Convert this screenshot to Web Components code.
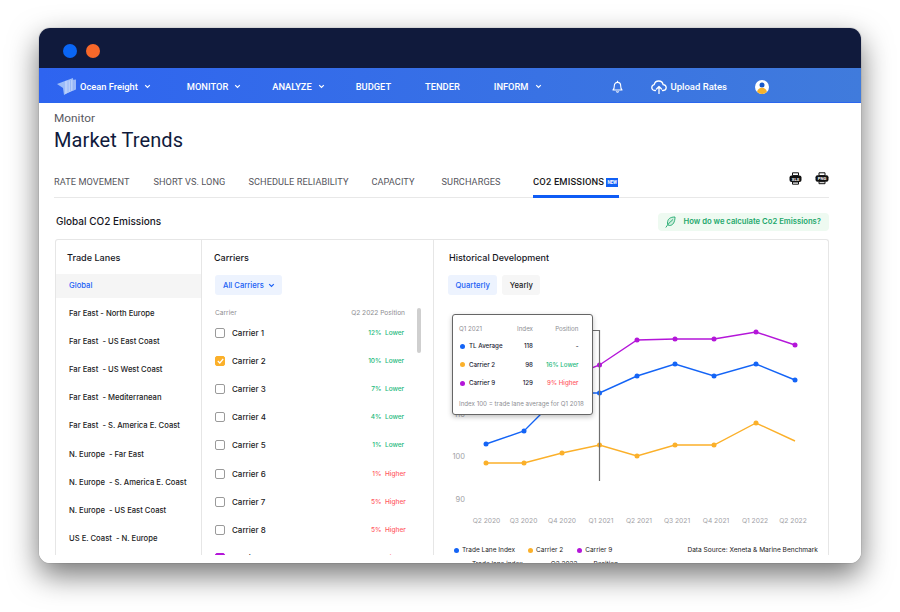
<!DOCTYPE html>
<html lang="en">
<head>
<meta charset="utf-8">
<title>Market Trends</title>
<style>
html,body{margin:0;padding:0;background:#fff;font-family:Inter,"Liberation Sans",sans-serif;}
</style>
</head>
<body>
<app-window>
  <title-bar></title-bar>
  <main-nav></main-nav>
  <page-body>
    <page-head></page-head>
    <tab-bar></tab-bar>
    <section-head></section-head>
    <data-panel>
      <lane-list></lane-list>
      <carrier-list></carrier-list>
      <history-chart></history-chart>
    </data-panel>
  </page-body>
</app-window>
<script>
function comp(name, css, html, init){
  customElements.define(name, class extends HTMLElement{
    constructor(){
      super();
      const r=this.attachShadow({mode:'open'});
      const h=typeof html==='function'?html(this):html;
      r.innerHTML='<style>'+css+'</style>'+h;
    }
  });
}
const chev='<svg width="7" height="5" viewBox="0 0 7 5" fill="none" stroke="currentColor" stroke-width="1.2"><path d="M1.200 1.200l2.300 2.300 2.300-2.300"/></svg>';

comp('app-window',`:host{display:flex;flex-direction:column;width:822px;height:535px;margin:28px 39px 49px;background:#fff;border-radius:11px;overflow:hidden;box-shadow:0 12px 30px rgba(0,0,0,.55),0 0 0 1px rgba(0,0,0,.06);}`,'<slot></slot>');

comp('title-bar',`:host{display:flex;flex:none;align-items:center;gap:9px;height:40px;padding:6px 0 0 24px;box-sizing:border-box;background:#101a3c;}
i{width:14px;height:14px;border-radius:50%;display:block}`,'<i style="background:#0a66f5"></i><i style="background:#f7682a"></i>');

comp('nav-item',`:host{display:inline-flex;align-items:center;gap:5px;font:500 9.300px/14px Roboto,sans-serif;color:#fff;white-space:nowrap}
svg{display:block;margin-left:1px}`,h=>'<slot></slot>'+(h.hasAttribute('menu')?chev:''));

comp('main-nav',`:host{display:flex;flex:none;align-items:center;height:35px;padding:3px 0 0 18px;box-sizing:border-box;background:linear-gradient(90deg,#2e64f0,#407bdc);border-bottom:1px solid #2a66ee;color:#fff}
nav-item{flex:none}
.logo{margin-right:4px;display:block}
.bell{margin-left:70px;display:block}
.up{margin-left:28px;margin-right:4px;display:block}
.av{margin-left:28px;display:block}`,
`<svg class="logo" width="19" height="17" viewBox="0 0 19 17"><path d="M0 6L16 0v12L7 17l-1-7z" fill="#9dbdf8"/><path d="M8 3l11-1.500V11.500L8 16z" fill="#c3d6fb" opacity=".75"/><path d="M11 2.500v12M13.500 2v11.500M16 1.500v11" stroke="#8fb2f6" stroke-width=".8"/></svg>
<nav-item menu>Ocean Freight</nav-item>
<nav-item menu style="margin-left:36px">MONITOR</nav-item>
<nav-item menu style="margin-left:31px">ANALYZE</nav-item>
<nav-item style="margin-left:31px">BUDGET</nav-item>
<nav-item style="margin-left:34px">TENDER</nav-item>
<nav-item menu style="margin-left:34px">INFORM</nav-item>
<svg class="bell" width="11" height="13" viewBox="0 0 11 13" fill="none" stroke="#fff" stroke-width="1.100" stroke-linejoin="round"><path d="M1 10h9c-1-1-1.300-2-1.300-4 0-2-1.300-3.600-3.200-3.600S2.300 4 2.300 6c0 2-.3 3-1.300 4z"/><path d="M5.500 .8v1.400M4.200 11.400c.3 1 2.300 1 2.600 0"/></svg>
<svg class="up" width="16" height="14" viewBox="0 0 16 14" fill="none" stroke="#fff" stroke-width="1.300" stroke-linecap="round" stroke-linejoin="round"><path d="M4.500 10.500H3.800C2 10.500 .8 9.200 .8 7.600c0-1.500 1-2.600 2.400-2.900C3.600 2.500 5.500 1 7.700 1c2.300 0 4 1.500 4.400 3.600 1.900.1 3.100 1.400 3.100 3 0 1.600-1.200 2.900-3 2.900h-.7"/><path d="M8 13.500V6.500M5.500 9L8 6.500 10.500 9"/></svg>
<nav-item style="font-size:9.500px">Upload Rates</nav-item>
<svg class="av" width="14" height="14" viewBox="0 0 14 14"><defs><clipPath id="c"><circle cx="7" cy="7" r="7"/></clipPath></defs><circle cx="7" cy="7" r="7" fill="#fff"/><g clip-path="url(#c)"><circle cx="7" cy="5" r="2.500" fill="#1757c9"/><ellipse cx="7" cy="11.500" rx="4.800" ry="3.700" fill="#f6b22c"/></g></svg>`);

comp('page-body',`:host{display:flex;flex-direction:column;flex:1;min-height:0;padding:8px 32px 0 15px;background:#fff}`,'<slot></slot>');

comp('page-head',`:host{display:block;flex:none}
.a{font:400 11.800px/14px Roboto,sans-serif;color:#5a5a5f}
.b{font:400 20px/26px Roboto,sans-serif;color:#101a3c;margin-top:2px;letter-spacing:.1px}`,
'<div class="a">Monitor</div><div class="b">Market Trends</div>');

comp('tab-item',`:host{display:flex;align-items:center;height:28px;box-sizing:border-box;margin-bottom:-1px;padding-bottom:4px;font:400 9.200px/14px Roboto,sans-serif;letter-spacing:.07px;color:#55555c;white-space:nowrap}
:host([active]){color:#1a1a22;font-weight:500;font-size:9.400px;letter-spacing:.15px;border-bottom:3px solid #0f5cf5;padding-bottom:1px;padding-right:1px}
b{display:inline-block;margin-left:2px;width:12px;height:9px;background:#1160f5;color:#fff;font:700 4.500px/9px Roboto,sans-serif;letter-spacing:0;text-align:center}`,
h=>'<slot></slot>'+(h.hasAttribute('active')?'<b>NEW</b>':''));

comp('tab-bar',`:host{display:flex;flex:none;align-items:flex-end;margin-top:17px;border-bottom:1px solid #e8e8e8;position:relative}
.tools{margin-left:auto;display:flex;gap:13px;align-self:flex-start;margin-top:2px}
svg{display:block}`,
`<tab-item>RATE MOVEMENT</tab-item>
<tab-item style="margin-left:24px">SHORT VS. LONG</tab-item>
<tab-item style="margin-left:23px">SCHEDULE RELIABILITY</tab-item>
<tab-item style="margin-left:23px">CAPACITY</tab-item>
<tab-item style="margin-left:27px">SURCHARGES</tab-item>
<tab-item active style="margin-left:32.500px">CO2 EMISSIONS</tab-item>
<div class="tools">
<svg width="13" height="13" viewBox="0 0 13 13"><path d="M3.500 .8h6v2.800h-6z" fill="none" stroke="#111" stroke-width="1"/><rect x=".5" y="3.500" width="12" height="6.500" rx="2" fill="#111"/><path d="M3.500 10h6v2.200h-6z" fill="#fff" stroke="#111"/><text x="6.500" y="8.500" font-family="Roboto" font-size="4.200" font-weight="700" text-anchor="middle" fill="#fff">XLS</text></svg>
<svg width="14" height="13" viewBox="0 0 14 13"><path d="M4 .8h6v2.800H4z" fill="none" stroke="#111" stroke-width="1"/><rect x=".5" y="3.200" width="13" height="6.500" rx="2" fill="#111"/><path d="M4 9.700h6v2H4z" fill="#fff" stroke="#111"/><text x="7" y="8.200" font-family="Roboto" font-size="4.200" font-weight="700" text-anchor="middle" fill="#fff">PNG</text></svg>
</div>`);

comp('section-head',`:host{display:flex;flex:none;align-items:center;justify-content:space-between;margin:15px 0 8px 2px;height:18px}
.t{font:500 10px/14px Inter,sans-serif;color:#16161e;margin-top:-2px}
.p{display:flex;align-items:center;gap:7px;height:18px;box-sizing:border-box;padding:0 8px 0 7px;background:#eefaf1;border-radius:4px;font:600 7.700px/12px Inter,sans-serif;color:#1da86c;white-space:nowrap}
svg{display:block}`,
`<div class="t">Global CO2 Emissions</div>
<div class="p"><svg width="11" height="12" viewBox="0 0 11 12" fill="none" stroke="#1da86c" stroke-width=".9"><path d="M10 1C5 1 2.500 3 2.500 7c0 1.500.7 2.500 2 2.500C8 9.500 10 6 10 1z" fill="#cfeedd"/><path d="M.8 11.500C3 8 5.500 5.500 8 3.500"/></svg><span>How do we calculate Co2 Emissions?</span></div>`);

comp('data-panel',`:host{display:flex;flex:none;height:316px;box-sizing:border-box;border:1px solid #e6e6e6;border-bottom:0;border-radius:3px 3px 0 0;margin-left:1px}`,'<slot></slot>');

comp('lane-row',`:host{display:flex;align-items:center;height:24px;padding-left:13px;margin-bottom:4.100px;font:500 7.650px/12px Inter,sans-serif;color:#1c1c24;white-space:pre}
:host([active]){background:#f5f5f5;color:#1a60f5}`,'<slot></slot>');

comp('lane-list',`:host{display:block;flex:none;width:145px;height:315px;overflow:hidden;border-right:1px solid #e6e6e6}
.t{font:500 9.100px/16px Inter,sans-serif;color:#16161e;padding:10px 0 8px 11px;height:16px}`,
`<div class="t">Trade Lanes</div>
<lane-row active>Global</lane-row>
<lane-row>Far East - North Europe</lane-row>
<lane-row>Far East  - US East Coast</lane-row>
<lane-row>Far East  - US West Coast</lane-row>
<lane-row>Far East  - Mediterranean</lane-row>
<lane-row>Far East  - S. America E. Coast</lane-row>
<lane-row>N. Europe  - Far East</lane-row>
<lane-row>N. Europe  - S. America E. Coast</lane-row>
<lane-row>N. Europe  - US East Coast</lane-row>
<lane-row>US E. Coast  - N. Europe</lane-row>`);

comp('carrier-row',`:host{display:flex;align-items:center;height:28.100px;font:500 8px/12px Inter,sans-serif;color:#1c1c24}
.c{flex:none;width:10px;height:10px;box-sizing:border-box;border:1.300px solid #9a9a9a;border-radius:2px;margin-right:7px;display:flex;align-items:center;justify-content:center}
:host([state=orange]) .c{background:#fbb02a;border-color:#fbb02a}
:host([state=purple]) .c{background:#b416d9;border-color:#b416d9}
.n{flex:1}
.v{display:grid;grid-template-columns:30px 21px;column-gap:3.500px;font:500 6.500px/12px Inter,sans-serif;text-align:right}
.v span:last-child{text-align:left;white-space:nowrap}
:host([dir=Lower]) .v{color:#1db97c}
:host([dir=Higher]) .v{color:#ff5a64}`,
h=>{const s=h.getAttribute('state');return `<div class="c">${s==='orange'?'<svg width="7" height="6" viewBox="0 0 7 6" fill="none" stroke="#fff" stroke-width="1.200"><path d="M.8 3l2 2L6.200 1"/></svg>':''}</div><div class="n"><slot></slot></div><div class="v"><span>${h.getAttribute('pct')}</span><span>${h.getAttribute('dir')}</span></div>`});

comp('carrier-list',`:host{display:block;flex:none;position:relative;width:232px;height:315px;overflow:hidden;border-right:1px solid #e6e6e6;box-sizing:border-box;padding:10px 27px 0 13px}
.t{font:500 9px/16px Inter,sans-serif;color:#16161e;margin-left:-1px}
.btn{display:inline-flex;align-items:center;gap:4px;height:20px;box-sizing:border-box;padding:1px 7px 0 8px;margin:9px 0 0 0;background:#edf3fe;border-radius:3px;font:500 7.650px/12px Inter,sans-serif;color:#1a60f5;vertical-align:top}
.btnw{height:29px}
.h{display:flex;justify-content:space-between;font:400 6.600px/14px Inter,sans-serif;color:#8d8d92;margin:11px 1px 0 0;height:13px}
.sb{position:absolute;left:215px;top:68px;width:4px;height:45px;background:#cfcfcf;border-radius:2px}`,
`<div class="t">Carriers</div>
<div class="btnw"><div class="btn">All Carriers ${chev}</div></div>
<div class="h"><span>Carrier</span><span>Q2 2022 Position</span></div>
<carrier-row pct="12%" dir="Lower">Carrier 1</carrier-row>
<carrier-row pct="10%" dir="Lower" state="orange">Carrier 2</carrier-row>
<carrier-row pct="7%" dir="Lower">Carrier 3</carrier-row>
<carrier-row pct="4%" dir="Lower">Carrier 4</carrier-row>
<carrier-row pct="1%" dir="Lower">Carrier 5</carrier-row>
<carrier-row pct="1%" dir="Higher">Carrier 6</carrier-row>
<carrier-row pct="5%" dir="Higher">Carrier 7</carrier-row>
<carrier-row pct="5%" dir="Higher">Carrier 8</carrier-row>
<carrier-row pct="9%" dir="Higher" state="purple">Carrier 9</carrier-row>
<div class="sb"></div>`);

comp('chart-tooltip',`:host{position:absolute;left:18px;top:14px;width:141px;height:101px;box-sizing:border-box;background:#fff;border:1px solid #666;border-radius:3px;box-shadow:0 2px 5px rgba(0,0,0,.25);padding:6.250px 13.500px 0 6px;font:500 6.200px/12px Inter,sans-serif;color:#1c1c34}
.g{display:grid;grid-template-columns:10px 48px 16px 1fr;grid-template-rows:15.500px 18.500px 18.500px 18.500px;align-items:center}
.h{color:#8d8d92;font-weight:400}
.r{text-align:right;white-space:nowrap}
.d{width:5px;height:5px;border-radius:50%;margin-left:1px}
.f{color:#8d8d92;font-weight:400;margin-top:5.750px;white-space:nowrap}
.hd{grid-column:1/3}`,
`<div class="g">
<span class="h hd">Q1 2021</span><span class="h r">Index</span><span class="h r">Position</span>
<i class="d" style="background:#1464f6"></i><span>TL Average</span><span class="r">118</span><span class="r">-</span>
<i class="d" style="background:#fbb02a"></i><span>Carrier 2</span><span class="r">98</span><span class="r" style="color:#1db97c">16% Lower</span>
<i class="d" style="background:#b416d9"></i><span>Carrier 9</span><span class="r">129</span><span class="r" style="color:#ff5a64">9% Higher</span>
</div><div class="f">Index 100 = trade lane average for Q1 2018</div>`);

comp('legend-item',`:host{display:inline-flex;align-items:center;gap:3.500px;font:400 6.500px/14px Inter,sans-serif;color:#1c1c24;white-space:nowrap}
i{width:5px;height:5px;border-radius:50%;background:var(--c)}`,'<i></i><slot></slot>');

const xs=[486,524,562,599.500,637,675,714,756,795];
const line=(ys,c,skip)=>{
  const pts=ys.map((y,i)=>xs[i]+','+y).join(' ');
  return `<polyline points="${pts}" fill="none" stroke="${c}" stroke-width="1.400"/>`+
  ys.map((y,i)=>skip===i?'':`<circle cx="${xs[i]}" cy="${y}" r="2.500" fill="${c}"/>`).join('');
};
const xl=['Q2 2020','Q3 2020','Q4 2020','Q1 2021','Q2 2021','Q3 2021','Q4 2021','Q1 2022','Q2 2022'];
const xlx=[486.500,523.500,562,601,639,677,716,755,793];

comp('history-chart',`:host{display:block;flex:1;min-width:0;position:relative}
.t{font:500 9px/16px Inter,sans-serif;color:#16161e;padding:10px 0 0 15px}
.bs{display:flex;gap:5px;margin:9px 0 0 14px}
.b{height:20px;display:flex;align-items:center;box-sizing:border-box;padding:1px 7.500px 0;border-radius:3px;font:500 7.650px/12px Inter,sans-serif;background:#f6f6f6;color:#1c1c24}
.b.on{background:#edf3fe;color:#1a60f5}
.plot{position:relative;height:230px;margin-top:5px}
svg{display:block;position:absolute;left:0;top:0}
text{font:400 6.700px Inter,sans-serif;fill:#a2a2a6}
.y{font-size:7.500px}
.lg{display:flex;align-items:center;height:14px;margin:13px 10px 0 19.500px}
.lg2{display:flex;height:14px;margin:0 0 0 38px;font:400 6.500px/14px Inter,sans-serif;color:#1c1c24}
.ds{margin-left:auto;font:400 6.600px/14px Inter,sans-serif;color:#1c1c24}`,
`<div class="t">Historical Development</div>
<div class="bs"><div class="b on">Quarterly</div><div class="b">Yearly</div></div>
<div class="plot">
<svg width="395" height="230" viewBox="434 300 395 230">
<text class="y" x="465" y="417" text-anchor="end">110</text>
<text class="y" x="465" y="459" text-anchor="end">100</text>
<text class="y" x="465" y="502" text-anchor="end">90</text>
${xl.map((t,i)=>`<text x="${xlx[i]}" y="523" text-anchor="middle">${t}</text>`).join('')}
${line([463,463,453,445,456,445,445,423,441],'#fbb02a',8)}
${line([444,431,393,393,376,364,376,364,380],'#1464f6')}
${line([400,395,380,365,340,339,339,332,345],'#b416d9')}
<path d="M590 330.500h9.500V481" fill="none" stroke="#6f6f6f" stroke-width="1.200"/>
</svg>
<chart-tooltip></chart-tooltip>
</div>
<div class="lg"><legend-item style="--c:#1464f6">Trade Lane Index</legend-item><legend-item style="--c:#fbb02a;margin-left:12.500px">Carrier 2</legend-item><legend-item style="--c:#b416d9;margin-left:13.500px">Carrier 9</legend-item><span class="ds">Data Source: Xeneta &amp; Marine Benchmark</span></div>
<div class="lg2"><span>Trade lane index</span><span style="margin-left:28px">Q2 2022</span><span style="margin-left:16px">Position</span></div>`);
</script>
</body>
</html>
